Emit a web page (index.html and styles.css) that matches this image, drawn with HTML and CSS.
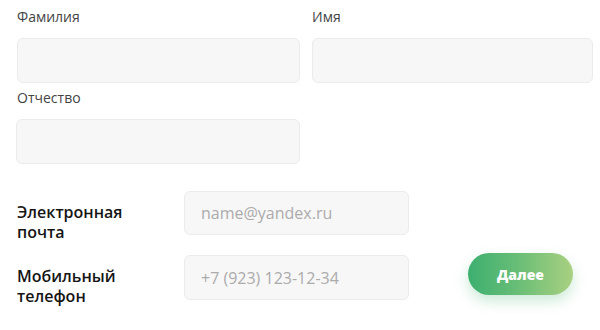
FILE: index.html
```html
<!DOCTYPE html>
<html lang="ru">
<head>
<meta charset="utf-8">
<title>Форма</title>
<link rel="stylesheet" href="styles.css">
</head>
<body>
<div class="page">
  <div class="names">
    <div class="field">
      <div class="label">Фамилия</div>
      <div class="input"></div>
    </div>
    <div class="field">
      <div class="label">Имя</div>
      <div class="input"></div>
    </div>
    <div class="field field-tight">
      <div class="label">Отчество</div>
      <div class="input"></div>
    </div>
  </div>
  <div class="contacts">
    <div class="row">
      <div class="row-label">Электронная<br>почта</div>
      <div class="input input-wide"><span class="ph">name@yandex.ru</span></div>
    </div>
    <div class="row">
      <div class="row-label">Мобильный<br>телефон</div>
      <div class="input input-wide"><span class="ph">+7 (923) 123-12-34</span></div>
      <button class="next">Далее</button>
    </div>
  </div>
</div>
</body>
</html>
```

FILE: styles.css
```css
html, body {
  margin: 0;
  padding: 0;
  background: #ffffff;
}
body {
  font-family: "Open Sans", "Noto Sans", sans-serif;
  width: 600px;
  height: 330px;
  overflow: hidden;
}
.page {
  padding: 8px 0 0 17px;
}
.names {
  display: grid;
  grid-template-columns: 283px 281px;
  column-gap: 12px;
  row-gap: 6px;
}
.field-tight .input {
  margin-left: -1px;
}
.label {
  font-size: 14px;
  line-height: 18px;
  height: 18px;
  color: #444444;
  margin-bottom: 12px;
}
.input {
  box-sizing: border-box;
  height: 45px;
  background: #f7f7f7;
  border: 1px solid #ebebeb;
  border-radius: 6px;
}
.contacts {
  margin-top: 27px;
  display: flex;
  flex-direction: column;
  row-gap: 20px;
}
.row {
  display: flex;
  align-items: flex-start;
  height: 44px;
}
.row-label {
  width: 167px;
  flex: none;
  padding-top: 11px;
  font-size: 16px;
  line-height: 20px;
  font-weight: 600;
  color: #151515;
}
.input-wide {
  width: 225px;
  height: 44px;
  flex: none;
  display: flex;
  align-items: center;
  padding-left: 16px;
}
.row + .row .input-wide {
  height: 45px;
}
.ph {
  font-size: 16px;
  color: #ababab;
}
.next {
  margin: -2px 0 0 59px;
  width: 105px;
  height: 42px;
  border: none;
  border-radius: 21px;
  background: linear-gradient(90deg, #3daf70 0%, #66bd76 45%, #a9d081 100%);
  box-shadow: 0 6px 14px rgba(70, 180, 110, 0.28);
  color: #ffffff;
  font-family: "Open Sans", "Noto Sans", sans-serif;
  font-size: 14px;
  font-weight: 800;
  padding: 0;
}
```
